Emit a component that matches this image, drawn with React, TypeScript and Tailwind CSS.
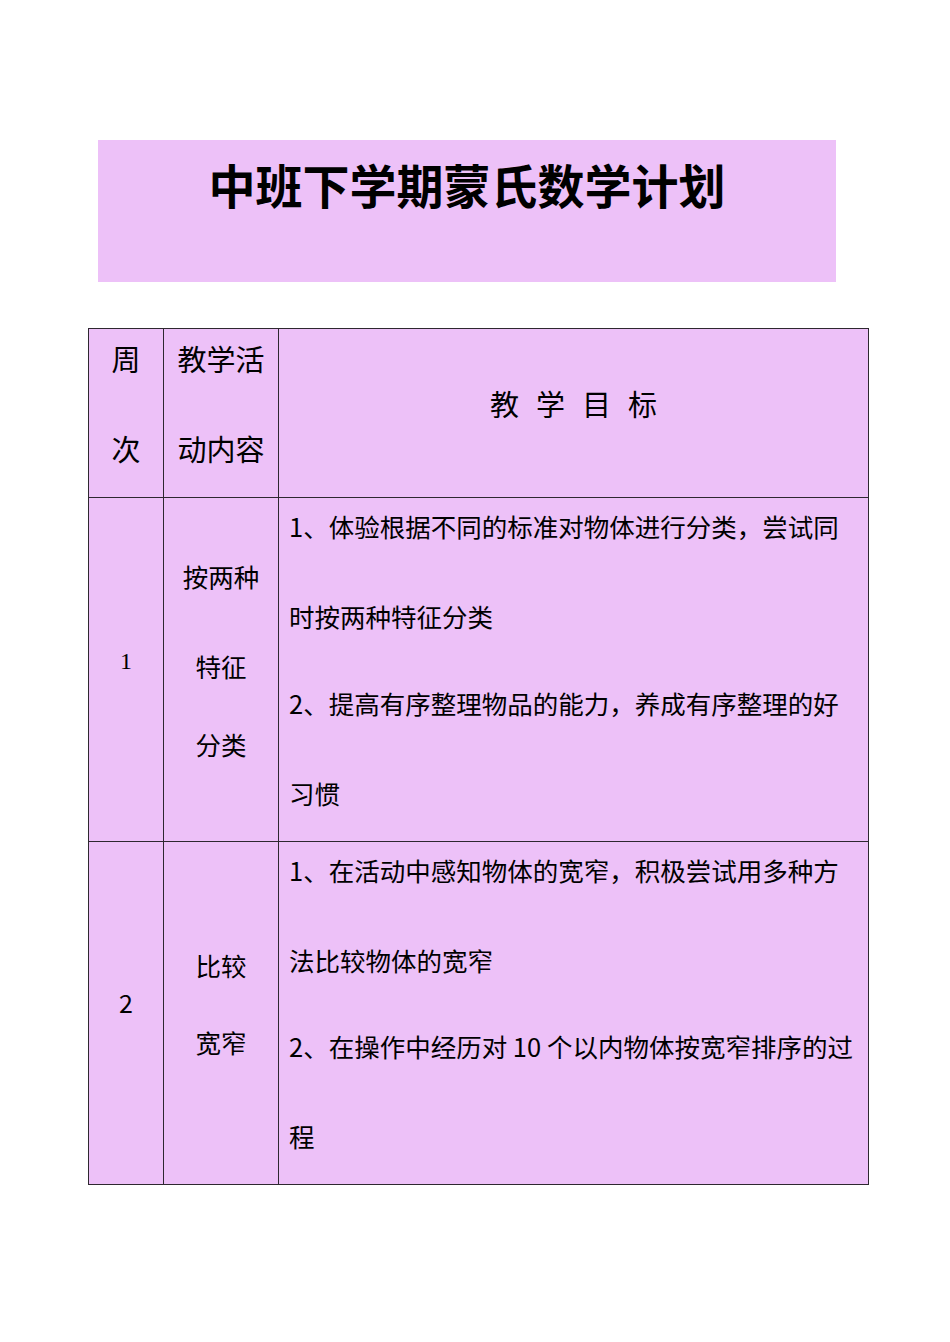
import React from "react";

const F = { fontFamily: '"Noto Sans CJK SC", "Noto Sans", sans-serif' };

function Line({ children, mt = 0, cls = "" }: { children: React.ReactNode; mt?: number; cls?: string }) {
  return (
    <div className={`whitespace-nowrap ${cls}`} style={mt ? { marginTop: mt } : undefined}>
      {children}
    </div>
  );
}

export default function App() {
  return (
    <div className="w-[950px] h-[1342px] bg-white text-black" style={F}>
      <div className="h-[140px]" />
      <div className="ml-[98px] w-[738px] h-[142px] bg-[#edc1f8] pt-[19px] text-center">
        <div className="text-[47px] leading-[50px] font-bold">中班下学期蒙氏数学计划</div>
      </div>
      <div className="h-[46px]" />
      <div className="ml-[88px] w-[781px] grid grid-cols-[75px_115px_590px] grid-rows-[169px_344px_343px] border-l border-t border-[#2e2830] bg-[#edc1f8]">
        {/* header */}
        <div className="border-r border-b border-[#2e2830] pt-[14px] flex flex-col items-center text-[29px] leading-[30px]">
          <Line>周</Line>
          <Line mt={60}>次</Line>
        </div>
        <div className="border-r border-b border-[#2e2830] pt-[14px] flex flex-col items-center text-[29px] leading-[30px]">
          <Line>教学活</Line>
          <Line mt={60}>动内容</Line>
        </div>
        <div className="border-r border-b border-[#2e2830] pt-[59px] flex justify-center gap-[17px] text-[29px] leading-[30px]">
          <span>教</span>
          <span>学</span>
          <span>目</span>
          <span>标</span>
        </div>

        {/* row 1 */}
        <div className="border-r border-b border-[#2e2830] pt-[148px] flex flex-col items-center text-[24px] leading-[30px]" style={{ fontFamily: '"Liberation Serif", serif' }}>
          <Line>1</Line>
        </div>
        <div className="border-r border-b border-[#2e2830] pt-[63px] flex flex-col items-center text-[25.5px] leading-[30px]">
          <Line>按两种</Line>
          <Line mt={60}>特征</Line>
          <Line mt={48}>分类</Line>
        </div>
        <div className="border-r border-b border-[#2e2830] pt-[13px] pl-[10px] flex flex-col text-[25.5px] leading-[30px]">
          <Line>1、体验根据不同的标准对物体进行分类，尝试同</Line>
          <Line mt={60}>时按两种特征分类</Line>
          <Line mt={57}>2、提高有序整理物品的能力，养成有序整理的好</Line>
          <Line mt={60}>习惯</Line>
        </div>

        {/* row 2 */}
        <div className="border-r border-b border-[#2e2830] pt-[145px] flex flex-col items-center text-[25px] leading-[30px]">
          <Line>2</Line>
        </div>
        <div className="border-r border-b border-[#2e2830] pt-[108px] flex flex-col items-center text-[25.5px] leading-[30px]">
          <Line>比较</Line>
          <Line mt={47}>宽窄</Line>
        </div>
        <div className="border-r border-b border-[#2e2830] pt-[13px] pl-[10px] flex flex-col text-[25.5px] leading-[30px]">
          <Line>1、在活动中感知物体的宽窄，积极尝试用多种方</Line>
          <Line mt={60}>法比较物体的宽窄</Line>
          <Line mt={56}>2、在操作中经历对 10 个以内物体按宽窄排序的过</Line>
          <Line mt={60}>程</Line>
        </div>
      </div>
    </div>
  );
}
